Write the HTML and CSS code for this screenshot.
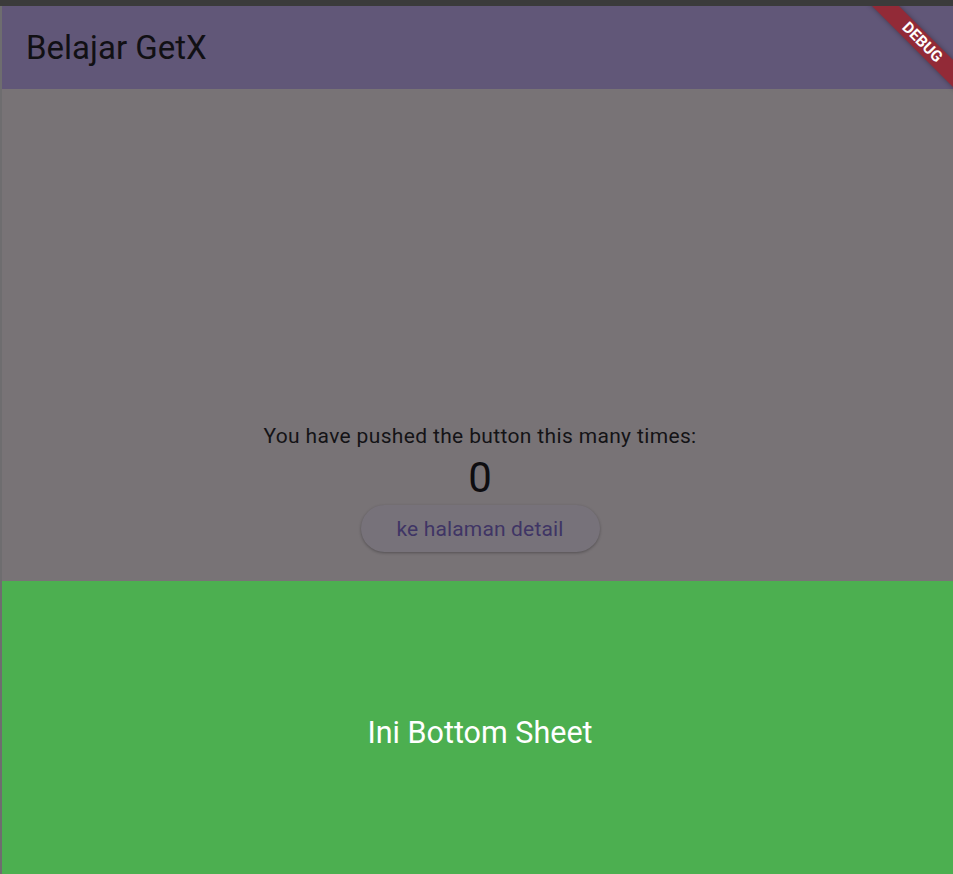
FILE: index.html
```html
<!DOCTYPE html>
<html lang="id">
<head>
<meta charset="utf-8">
<title>Belajar GetX</title>
<link rel="stylesheet" href="styles.css">
</head>
<body>
<div class="titlebar"></div>
<div class="window">
  <div class="app">
    <header class="appbar">
      <h1 class="appbar-title">Belajar GetX</h1>
    </header>
    <main class="body">
      <p class="counter-label">You have pushed the button this many times:</p>
      <p class="counter-value">0</p>
      <button class="detail-btn" type="button">ke halaman detail</button>
    </main>
    <section class="sheet">
      <p class="sheet-text">Ini Bottom Sheet</p>
    </section>
    <div class="debug-banner"><span>DEBUG</span></div>
  </div>
</div>
</body>
</html>
```
FILE: styles.css
```css
* { box-sizing: border-box; }
html, body {
  margin: 0;
  padding: 0;
  width: 953px;
  height: 874px;
  overflow: hidden;
  background: #6e6d6f;
  font-family: Roboto, "Noto Sans", sans-serif;
}
.titlebar {
  height: 6px;
  background: #3b3b3b;
}
.window {
  padding-left: 2px;
  height: 868px;
}
.app {
  position: relative;
  width: 956px;
  height: 868px;
  overflow: hidden;
  background: #787376;
  display: flex;
  flex-direction: column;
}
.appbar {
  height: 83px;
  flex: none;
  background: #615778;
  display: flex;
  align-items: center;
  padding-left: 24px;
}
.appbar-title {
  margin: 0;
  font-weight: 400;
  font-size: 33px;
  line-height: 42px;
  color: #111014;
}
.body {
  flex: 1;
  display: flex;
  flex-direction: column;
  align-items: center;
  justify-content: center;
  padding-top: 10px;
}
.counter-label {
  margin: 0;
  font-size: 21px;
  line-height: 30px;
  color: #141316;
  letter-spacing: 0.35px;
}
.counter-value {
  margin: 0;
  font-size: 42px;
  line-height: 54px;
  color: #0e0d10;
}
.detail-btn {
  width: 239px;
  height: 47px;
  border: none;
  border-radius: 24px;
  background: #77727a;
  box-shadow: 0 1px 3px rgba(0,0,0,0.3);
  color: #3f3565;
  font-family: Roboto, "Noto Sans", sans-serif;
  font-size: 21px;
  letter-spacing: 0.15px;
  padding: 0;
}
.sheet {
  position: absolute;
  left: 0;
  right: 0;
  bottom: 0;
  height: 293px;
  background: #4caf50;
  display: flex;
  align-items: center;
  justify-content: center;
  padding-top: 10px;
}
.sheet-text {
  margin: 0;
  font-size: 30.5px;
  color: #ffffff;
}
.debug-banner {
  position: absolute;
  left: 855px;
  top: 26.5px;
  width: 130px;
  height: 19px;
  transform: rotate(45deg);
  background: #922a37;
  box-shadow: 0 0 5px rgba(0,0,0,0.35);
  display: flex;
  align-items: center;
  justify-content: center;
}
.debug-banner span {
  color: #ffffff;
  font-family: Roboto, "Liberation Sans", sans-serif;
  font-weight: 700;
  font-size: 15.5px;
  line-height: 1;
}
```
